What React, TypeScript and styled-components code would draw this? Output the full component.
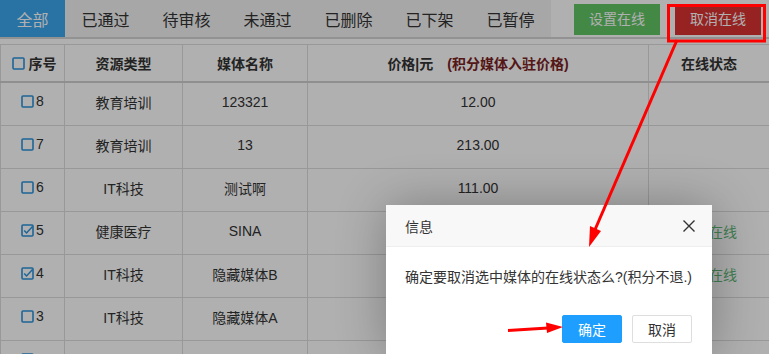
import styled, { createGlobalStyle } from 'styled-components';

const GlobalStyle = createGlobalStyle`
  html, body {
    margin: 0;
    padding: 0;
    background: #ffffff;
    overflow: hidden;
  }
  body {
    font-family: 'Liberation Sans', Arial, 'Noto Sans CJK SC', sans-serif;
    color: #333;
  }
`;

const Page = styled.div`
  width: 769px;
  height: 354px;
  position: relative;
  overflow: hidden;
`;

const Toolbar = styled.div`
  display: flex;
  align-items: stretch;
  justify-content: space-between;
  height: 37px;
  border-bottom: 2px solid #d4d4d4;
  padding-right: 8px;
`;

const Tabs = styled.div`
  display: flex;
  background: #f2f2f2;
`;

const Tab = styled.div<{ $active?: boolean }>`
  display: flex;
  align-items: center;
  padding: 0 16.5px;
  font-size: 16px;
  color: ${p => (p.$active ? '#ffffff' : '#333')};
  background: ${p => (p.$active ? '#3ca6ee' : 'transparent')};
`;

const Actions = styled.div`
  display: flex;
  align-items: flex-start;
  gap: 15px;
  padding-top: 4px;
`;

const ActionButton = styled.div<{ $tone: 'green' | 'red' }>`
  height: 31px;
  line-height: 31px;
  padding: 0 15px;
  font-size: 14px;
  color: #ffffff;
  background: ${p => (p.$tone === 'green' ? '#62c565' : '#d93232')};
`;

const Table = styled.table`
  margin-top: 5px;
  width: 769px;
  border-collapse: collapse;
  table-layout: fixed;
  font-size: 14px;
`;

const Th = styled.th`
  height: 36px;
  border: 1px solid #dcdcdc;
  border-bottom: 2px solid #d0d0d0;
  font-weight: bold;
  color: #333;
  text-align: center;
  padding: 0;
`;

const Td = styled.td`
  height: 38px;
  border: 1px solid #dcdcdc;
  text-align: center;
  color: #333;
  padding: 0 0 4px;
  vertical-align: middle;
`;

const CheckCell = styled.span`
  display: inline-flex;
  align-items: center;
  gap: 2px;
`;

const HeadCheck = styled.span`
  display: inline-flex;
  align-items: center;
  gap: 4px;
  padding-left: 3px;
`;

const PriceNote = styled.span`
  color: #7a2222;
  margin-left: 14px;
`;

const Online = styled.span`
  color: #5fb878;
`;

const Mask = styled.div`
  position: absolute;
  inset: 0;
  background: rgba(0, 0, 0, 0.31);
`;

const Dialog = styled.div`
  position: absolute;
  left: 386px;
  top: 205px;
  width: 326px;
  background: #ffffff;
  box-shadow: 1px 1px 50px rgba(0, 0, 0, 0.3);
  font-family: 'Liberation Sans', Arial, 'Noto Sans CJK SC', sans-serif;
`;

const DialogHead = styled.div`
  display: flex;
  align-items: center;
  justify-content: space-between;
  height: 41px;
  padding: 0 16px 0 19px;
  background: #f8f8f8;
  border-bottom: 1px solid #eeeeee;
  font-size: 14px;
  color: #333;
`;

const DialogBody = styled.div`
  padding: 20px 19px;
  line-height: 20px;
  font-size: 14px;
  color: #333;
`;

const DialogButtons = styled.div`
  display: flex;
  justify-content: flex-end;
  gap: 10px;
  padding: 8px 20px 12px;
`;

const DialogButton = styled.div<{ $primary?: boolean }>`
  height: 28px;
  line-height: 28px;
  padding: 0 15px;
  box-sizing: border-box;
  border-radius: 2px;
  font-size: 14px;
  border: 1px solid ${p => (p.$primary ? '#1e9fff' : '#dedede')};
  background: ${p => (p.$primary ? '#1e9fff' : '#ffffff')};
  color: ${p => (p.$primary ? '#ffffff' : '#333')};
`;

const Annotations = styled.svg`
  position: absolute;
  left: 0;
  top: 0;
  pointer-events: none;
`;

const Checkbox = ({ checked }: { checked?: boolean }) => (
  <svg width="13" height="13" viewBox="0 0 13 13">
    <rect x="1" y="1" width="11" height="11" rx="1" fill="none" stroke="#2b93dc" strokeWidth="1.6" />
    {checked && (
      <path d="M3.2 6.4 L5.6 8.9 L11.5 2.6" fill="none" stroke="#2b93dc" strokeWidth="1.5" />
    )}
  </svg>
);

const rows = [
  { id: 8, type: '教育培训', name: '123321', price: '12.00' },
  { id: 7, type: '教育培训', name: '13', price: '213.00' },
  { id: 6, type: 'IT科技', name: '测试啊', price: '111.00' },
  { id: 5, type: '健康医疗', name: 'SINA', price: '10.00', checked: true, online: true },
  { id: 4, type: 'IT科技', name: '隐藏媒体B', price: '10.00', checked: true, online: true },
  { id: 3, type: 'IT科技', name: '隐藏媒体A', price: '10.00' },
  { id: 2, type: '健康医疗', name: '测试', price: '10.00' },
];

const tabs = ['全部', '已通过', '待审核', '未通过', '已删除', '已下架', '已暂停'];

export default function App() {
  return (
    <Page>
      <GlobalStyle />
      <Toolbar>
        <Tabs>
          {tabs.map((t, i) => (
            <Tab key={t} $active={i === 0}>
              {t}
            </Tab>
          ))}
        </Tabs>
        <Actions>
          <ActionButton $tone="green">设置在线</ActionButton>
          <ActionButton $tone="red">取消在线</ActionButton>
        </Actions>
      </Toolbar>
      <Table>
        <colgroup>
          <col style={{ width: 64 }} />
          <col style={{ width: 118 }} />
          <col style={{ width: 125 }} />
          <col style={{ width: 341 }} />
          <col style={{ width: 121 }} />
        </colgroup>
        <thead>
          <tr>
            <Th>
              <HeadCheck>
                <Checkbox />
                序号
              </HeadCheck>
            </Th>
            <Th>资源类型</Th>
            <Th>媒体名称</Th>
            <Th>
              价格|元<PriceNote>(积分媒体入驻价格)</PriceNote>
            </Th>
            <Th>在线状态</Th>
          </tr>
        </thead>
        <tbody>
          {rows.map(r => (
            <tr key={r.id}>
              <Td>
                <CheckCell>
                  <Checkbox checked={r.checked} />
                  {r.id}
                </CheckCell>
              </Td>
              <Td>{r.type}</Td>
              <Td>{r.name}</Td>
              <Td>{r.price}</Td>
              <Td>{r.online && <Online>已经在线</Online>}</Td>
            </tr>
          ))}
        </tbody>
      </Table>
      <Mask />
      <Dialog>
        <DialogHead>
          信息
          <svg width="14" height="14" viewBox="0 0 14 14">
            <path d="M1.5 1.5 L12.5 12.5 M12.5 1.5 L1.5 12.5" stroke="#333" strokeWidth="1.4" />
          </svg>
        </DialogHead>
        <DialogBody>确定要取消选中媒体的在线状态么?(积分不退.)</DialogBody>
        <DialogButtons>
          <DialogButton $primary>确定</DialogButton>
          <DialogButton>取消</DialogButton>
        </DialogButtons>
      </Dialog>
      <Annotations width="769" height="354" viewBox="0 0 769 354">
        <rect x="668.5" y="5.5" width="96" height="35.5" fill="none" stroke="#ff0000" strokeWidth="3" />
        <line x1="677" y1="40" x2="594" y2="232" stroke="#ff0000" strokeWidth="3" />
        <polygon points="589,247 590,226 601,231" fill="#ff0000" />
        <line x1="508" y1="330.5" x2="548" y2="328" stroke="#ff0000" strokeWidth="3" />
        <polygon points="563,327 546,322.5 547,333" fill="#ff0000" />
      </Annotations>
    </Page>
  );
}
